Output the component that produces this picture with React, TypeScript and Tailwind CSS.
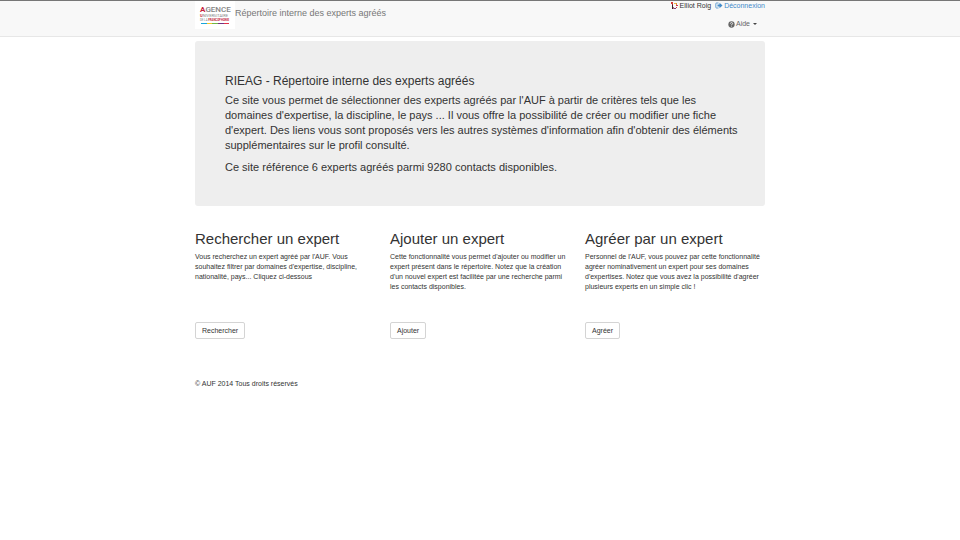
import { Fragment } from "react";

function Lines({ lines }: { lines: string[] }) {
  return (
    <>
      {lines.map((line, i) => (
        <Fragment key={line}>
          {i > 0 && <br />}
          {line}
        </Fragment>
      ))}
    </>
  );
}

function Logo() {
  return (
    <svg viewBox="0 0 40 28" className="block h-7 w-10" role="img" aria-label="Agence universitaire de la Francophonie">
      <rect width="40" height="28" fill="#fff" />
      <g fontFamily="Roboto, 'Liberation Sans', Arial, sans-serif" fill="#858585">
        <text x="5" y="11" fontSize="8" fontWeight="500">
          <tspan fill="#c41e3d" fontWeight="bold">A</tspan>GENCE
        </text>
        <text x="5" y="16" fontSize="4">
          <tspan fill="#c41e3d" fontWeight="bold">U</tspan>NIVERSITAIRE
        </text>
        <text x="5" y="20" fontSize="2.800">
          DE LA <tspan fill="#c41e3d" fontWeight="bold">FRANCOPHONIE</tspan>
        </text>
      </g>
      <path d="M6 22h6v1H6z" fill="#18a5dc" />
      <path d="M12 22h5v1h-5z" fill="#f1c72a" />
      <path d="M17 22h6v1h-6z" fill="#70b747" />
      <path d="M23 22h6v1h-6z" fill="#75307f" />
      <path d="M29 22h5v1h-5z" fill="#e23047" />
    </svg>
  );
}

function UserIcon() {
  return (
    <svg viewBox="0 0 8 8" className="h-2 w-2" aria-hidden="true">
      <path d="M0 0h2v2H0z" fill="#d63b35" />
      <path d="M3 1h2v1H3z" fill="#ebb44e" />
      <path d="M1 2h1v3H1z" fill="#9c1a31" />
      <path d="M1 3h1v4H1z" fill="#3a2028" />
      <path d="M2 5h1v2H2z" fill="#b06a78" />
      <path d="M5 1h1v2H5z" fill="#e08d35" />
      <path d="M5 3h2v1H5z" fill="#d32f54" />
      <path d="M3 6h2v1H3z" fill="#7b3d86" />
      <path d="M5 5h1v1H5z" fill="#d63b35" />
    </svg>
  );
}

function SignOutIcon() {
  return (
    <svg viewBox="0 0 8 8" className="h-2 w-2" aria-hidden="true">
      <path d="M3.500 1H1.500Q.8 1 .8 1.800v3.400Q.8 6 1.500 6h2" fill="none" stroke="#428bca" strokeWidth=".8" />
      <path d="M2.500 2.500h2V.8l3 2.700-3 2.700V4.500h-2z" fill="#428bca" />
    </svg>
  );
}

function HelpIcon() {
  return (
    <svg viewBox="0 0 8 8" className="h-[7px] w-[7px]" aria-hidden="true">
      <circle cx="4" cy="4" r="3.600" fill="#666" />
      <path d="M2.700 3Q2.900 1.800 4 1.800q1.300.1 1.300 1.100C5.300 3.700 4 3.700 4 4.700" fill="none" stroke="#f8f8f8" strokeWidth="1" />
      <path d="M3.500 5.300h1v1h-1z" fill="#f8f8f8" />
    </svg>
  );
}

const features = [
  {
    title: "Rechercher un expert",
    lines: [
      "Vous recherchez un expert agréé par l'AUF. Vous",
      "souhaitez filtrer par domaines d'expertise, discipline,",
      "nationalité, pays... Cliquez ci-dessous",
    ],
    action: "Rechercher",
  },
  {
    title: "Ajouter un expert",
    lines: [
      "Cette fonctionnalité vous permet d'ajouter ou modifier un",
      "expert présent dans le répertoire. Notez que la création",
      "d'un nouvel expert est facilitée par une recherche parmi",
      "les contacts disponibles.",
    ],
    action: "Ajouter",
  },
  {
    title: "Agréer par un expert",
    lines: [
      "Personnel de l'AUF, vous pouvez par cette fonctionnalité",
      "agréer nominativement un expert pour ses domaines",
      "d'expertises. Notez que vous avez la possibilité d'agréer",
      "plusieurs experts en un simple clic !",
    ],
    action: "Agréer",
  },
];

export default function App() {
  return (
    <div className="min-h-screen bg-white font-['Liberation_Sans',Arial,sans-serif] text-[7px] leading-[10px] text-[#333]">
      <header className="border-t border-b border-t-[#777] border-b-[#e7e7e7] bg-[#f8f8f8]">
        <div className="mx-auto flex h-[35px] max-w-[570px] items-start justify-between">
          <a href="#" className="flex items-start text-[9px] leading-6 text-[#777]">
            <Logo />
            <span>Répertoire interne des experts agréés</span>
          </a>
          <div className="flex flex-col items-end gap-2">
            <div className="flex items-center gap-1">
              <span className="flex items-center gap-px">
                <UserIcon />
                Elliot Roig
              </span>
              <a href="#" className="flex items-center gap-px text-[#428bca]">
                <SignOutIcon />
                Déconnexion
              </a>
            </div>
            <button type="button" className="mr-2 flex items-center gap-px text-[#666]">
              <HelpIcon />
              Aide
              <svg viewBox="0 0 4 2" className="ml-0.5 h-0.5 w-1" aria-hidden="true">
                <path d="M0 0h4L2 2z" fill="#444" />
              </svg>
            </button>
          </div>
        </div>
      </header>

      <div className="mx-auto max-w-[570px] pt-1">
        <section className="rounded-[3px] bg-[#eee] px-[30px] pt-8 pb-[31px]">
          <h1 className="text-[12px] leading-4">RIEAG - Répertoire interne des experts agréés</h1>
          <p className="mt-1 text-[11px] leading-[15px] whitespace-nowrap">
            <Lines
              lines={[
                "Ce site vous permet de sélectionner des experts agréés par l'AUF à partir de critères tels que les",
                "domaines d'expertise, la discipline, le pays ... Il vous offre la possibilité de créer ou modifier une fiche",
                "d'expert. Des liens vous sont proposés vers les autres systèmes d'information afin d'obtenir des éléments",
                "supplémentaires sur le profil consulté.",
              ]}
            />
          </p>
          <p className="mt-[7px] text-[11px] leading-[15px]">
            Ce site référence 6 experts agréés parmi 9280 contacts disponibles.
          </p>
        </section>

        <main className="mt-[25px] grid grid-cols-3 gap-[15px]">
          {features.map((feature) => (
            <section key={feature.title} className="flex flex-col items-start">
              <h2 className="text-[15px] leading-4">{feature.title}</h2>
              <p className="mt-[5px] mb-[30px] min-h-10 whitespace-nowrap">
                <Lines lines={feature.lines} />
              </p>
              <button
                type="button"
                className="h-[17px] rounded-xs border border-[#d4d4d4] bg-white px-1.5 text-[7px] leading-[10px]"
              >
                {feature.action}
              </button>
            </section>
          ))}
        </main>

        <footer className="mt-10">© AUF 2014 Tous droits réservés</footer>
      </div>
    </div>
  );
}
